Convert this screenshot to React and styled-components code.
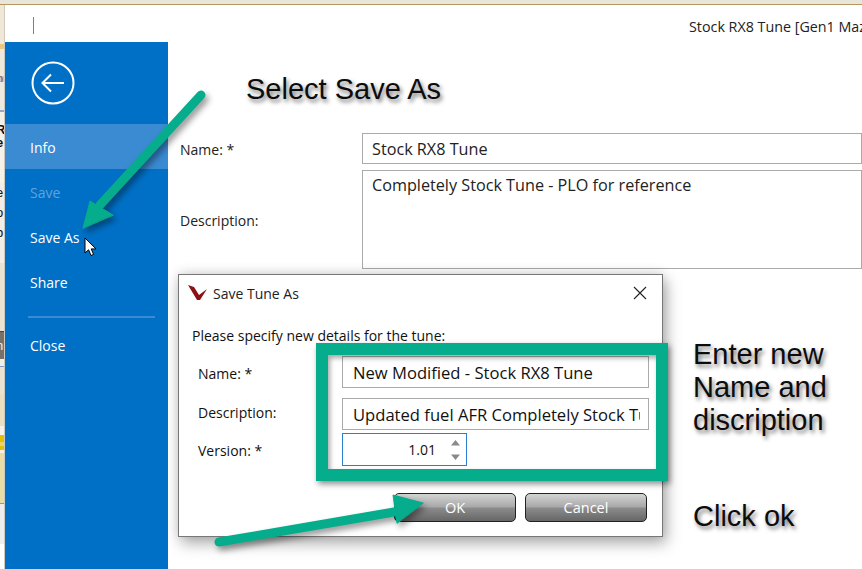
import React from 'react'
import styled, {createGlobalStyle} from 'styled-components'

const UI_FONT = `'Open Sans', 'Noto Sans', sans-serif`
const NOTE_FONT = `'Liberation Sans', Arial, sans-serif`

// what peeks out from behind the window on the left edge
const stripSlices = [
    {h: 39, bg: '#efe7d8'},
    {h: 5, bg: '#eec77f'},
    {h: 27, bg: '#efe9dc'},
    {h: 6, bg: '#cfc6cf', letter: 'o', color: '#8a5a4a'},
    {h: 28, bg: '#efeae0'},
    {h: 2, bg: '#8fa9c8'},
    {h: 11, bg: '#f3f0e8'},
    {h: 14, bg: '#f5f2ea', letter: 'R', bold: true},
    {h: 12, bg: '#f5f2ea', letter: 'e', bold: true},
    {h: 18, bg: '#f5f2ea', letter: ':', color: '#2a70c0'},
    {h: 16, bg: '#f5f2ea', letter: 'l', bold: true},
    {h: 20, bg: '#f2eee6', letter: 'e'},
    {h: 20, bg: '#f2eee6', letter: 'o'},
    {h: 20, bg: '#f2eee6', letter: 'b'},
    {h: 20, bg: '#f2eee6', letter: 'i'},
    {h: 68, bg: '#ebe3d2'},
    {h: 1, bg: '#444'},
    {h: 27, bg: '#77716a', letter: 'h', color: '#eee'},
    {h: 7, bg: '#f2efe8'},
    {h: 1, bg: '#7f9fc8'},
    {h: 22, bg: '#ebe3d2'},
    {h: 5, bg: '#ebe3d2', letter: '.', color: '#123a70'},
    {h: 32, bg: '#ebdfc0'},
    {h: 9, bg: '#f4f2ea'},
    {h: 7, bg: '#e6c000'},
    {h: 4, bg: '#e8d56a'},
    {h: 4, bg: '#e6c000'},
    {h: 3, bg: '#f4f2ea'},
    {h: 50, bg: '#e9dca4'},
    {h: 1, bg: '#99958a'},
    {h: 40, bg: '#ededed'},
]

const App = () => {
    return(
        <Page>
            <GlobalStyle />
            <TopEdge />
            <Desktop>
                <BackStrip>
                    {stripSlices.map((s, i) =>
                        <StripSlice key={i} $h={s.h} $bg={s.bg} $bold={s.bold} $color={s.color}>{s.letter}</StripSlice>
                    )}
                </BackStrip>
                <Window>
                    <TitleBar>
                        <Caret />
                        <WindowTitle>Stock RX8 Tune [Gen1 Mazda RX8]</WindowTitle>
                    </TitleBar>
                    <Content>
                        <Sidebar>
                            <BackRow>
                                <svg width="44" height="44" viewBox="0 0 44 44" fill="none" stroke="#fff" strokeWidth="2">
                                    <circle cx="22" cy="22" r="20.5" />
                                    <path d="M33 22H12M20 13.5 11.5 22l8.5 8.5" />
                                </svg>
                            </BackRow>
                            <SidebarItem $active>Info</SidebarItem>
                            <SidebarItem $dim>Save</SidebarItem>
                            <SidebarItem>Save As</SidebarItem>
                            <SidebarItem>Share</SidebarItem>
                            <SidebarRule />
                            <SidebarItem>Close</SidebarItem>
                        </Sidebar>
                        <Main>
                            <FieldLabel>Name: *</FieldLabel>
                            <TextField readOnly value="Stock RX8 Tune" />
                            <FieldLabel>Description:</FieldLabel>
                            <TextArea readOnly value="Completely Stock Tune - PLO for reference" />
                        </Main>
                    </Content>
                </Window>
            </Desktop>

            <Dialog>
                <DialogHeader>
                    <svg width="21" height="16" viewBox="0 0 21 16">
                        <polygon points="0,0 6,2 11,10 19,4 12,15 9,15" fill="#8c1016" />
                    </svg>
                    <DialogTitle>Save Tune As</DialogTitle>
                    <CloseIcon width="14" height="14" viewBox="0 0 14 14" stroke="#222" strokeWidth="1.1">
                        <path d="M1 1l12 12M13 1 1 13" />
                    </CloseIcon>
                </DialogHeader>
                <Prompt>Please specify new details for the tune:</Prompt>
                <DialogForm>
                    <DialogLabel $shift={1}>Name: *</DialogLabel>
                    <DialogInput readOnly value="New Modified - Stock RX8 Tune" />
                    <DialogLabel $shift={-2}>Description:</DialogLabel>
                    <DialogInput readOnly value="Updated fuel AFR Completely Stock Tune - PLO for reference" />
                    <DialogLabel $shift={1}>Version: *</DialogLabel>
                    <Spinner>
                        <SpinnerValue>1.01</SpinnerValue>
                        <SpinnerArrows>
                            <svg width="9" height="22" viewBox="0 0 9 22" fill="#8a8a8a">
                                <path d="M4.5 1 9 6.5H0zM0 15.5h9L4.5 21z" />
                            </svg>
                        </SpinnerArrows>
                    </Spinner>
                </DialogForm>
                <ButtonRow>
                    <GreyButton>OK</GreyButton>
                    <GreyButton>Cancel</GreyButton>
                </ButtonRow>
            </Dialog>

            <HighlightFrame />

            <Arrows width="862" height="569" viewBox="0 0 862 569">
                <g fill="#05ad8c" stroke="#05ad8c" strokeLinecap="round" strokeLinejoin="round">
                    <path d="M201 95 100 205" fill="none" strokeWidth="9" />
                    <polygon points="83,228 90,201 113,215" strokeWidth="1" />
                    <path d="M219 542 400 511" fill="none" strokeWidth="9" />
                    <polygon points="423,503 393,495 397,523" strokeWidth="1" />
                </g>
            </Arrows>

            <Pointer width="13" height="20" viewBox="0 0 13 20">
                <path d="M1 1v15l3.6-3.2L7 18.5l2.6-1.1-2.4-5.5H12z" fill="#fff" stroke="#000" strokeWidth="1" />
            </Pointer>

            <Note $x={246} $y={73}>Select Save As</Note>
            <Note $x={693} $y={338}>Enter new<br />Name and<br />discription</Note>
            <Note $x={693} $y={500}>Click ok</Note>
        </Page>
    )
};

const GlobalStyle = createGlobalStyle`
    html, body{
        margin: 0;
        padding: 0;
        background: #fff;
    }
    *{
        box-sizing: border-box;
    }
`;

const Page = styled.div`
    position: relative;
    display: flex;
    flex-direction: column;
    width: 862px;
    height: 569px;
    overflow: hidden;
    font-family: ${UI_FONT};
    background: #fff;
`;

const TopEdge = styled.div`
    height: 5px;
    flex: none;
    background: #e9e5da;
    border-bottom: 1px solid #b39a5c;
`;

const Desktop = styled.div`
    display: flex;
    flex: 1;
    min-height: 0;
`;

const BackStrip = styled.div`
    display: flex;
    flex-direction: column;
    flex: none;
    width: 5px;
    overflow: hidden;
    border-right: 1px solid #cfcabd;
`;

const StripSlice = styled.div`
    flex: none;
    height: ${p => p.$h}px;
    background: ${p => p.$bg};
    color: ${p => p.$color || '#111'};
    font-family: ${NOTE_FONT};
    font-size: 13px;
    font-weight: ${p => p.$bold ? 700 : 400};
    line-height: ${p => p.$h}px;
    text-indent: -4px;
    overflow: hidden;
`;

const Window = styled.div`
    display: flex;
    flex-direction: column;
    flex: 1;
    min-width: 0;
`;

const TitleBar = styled.div`
    display: flex;
    align-items: center;
    flex: none;
    height: 37px;
    padding-left: 28px;
    overflow: hidden;
    white-space: nowrap;
`;

const Caret = styled.div`
    flex: none;
    width: 1px;
    height: 17px;
    margin-top: 3px;
    background: #808080;
`;

const WindowTitle = styled.div`
    flex: none;
    margin: 5px 0 0 655px;
    font-size: 14.3px;
    color: #222;
`;

const Content = styled.div`
    display: flex;
    flex: 1;
    min-height: 0;
`;

const Sidebar = styled.nav`
    display: flex;
    flex-direction: column;
    flex: none;
    width: 163px;
    background: #0070c6;
`;

const BackRow = styled.div`
    display: flex;
    align-items: center;
    height: 82px;
    padding-left: 26px;
`;

const SidebarItem = styled.div`
    display: flex;
    align-items: center;
    height: 45px;
    padding: 2px 0 0 25px;
    font-size: 14px;
    color: ${p => p.$dim ? '#5fa3dc' : '#fff'};
    background: ${p => p.$active ? '#3a8bd2' : 'transparent'};
`;

const SidebarRule = styled.div`
    height: 2px;
    margin: 12px 13px 4px 23px;
    background: #3a8bd2;
`;

const Main = styled.main`
    display: grid;
    grid-template-columns: 182px 1fr;
    grid-template-rows: 31px 99px;
    row-gap: 6px;
    align-items: center;
    align-content: start;
    flex: 1;
    min-width: 0;
    padding: 91px 0 0 12px;
`;

const FieldLabel = styled.label`
    padding-top: 2px;
    font-size: 14px;
    color: #222;
`;

const TextField = styled.input`
    width: 100%;
    height: 100%;
    padding: 0 10px 0 9px;
    border: 1px solid #aaa;
    outline: none;
    font-family: ${UI_FONT};
    font-size: 16.2px;
    color: #222;
`;

const TextArea = styled.textarea`
    display: block;
    width: 100%;
    height: 100%;
    padding: 3px 10px 3px 9px;
    border: 1px solid #aaa;
    outline: none;
    resize: none;
    overflow: hidden;
    font-family: ${UI_FONT};
    font-size: 16.2px;
    color: #222;
`;

const Dialog = styled.section`
    position: absolute;
    left: 178px;
    top: 274px;
    display: flex;
    flex-direction: column;
    width: 485px;
    height: 263px;
    padding: 0 15px 14px 13px;
    background: #fff;
    border: 1px solid #777;
    box-shadow: 3px 6px 14px rgba(0,0,0,.35), 0 -3px 10px rgba(0,0,0,.08);
`;

const DialogHeader = styled.header`
    display: flex;
    align-items: center;
    flex: none;
    height: 36px;
    margin-left: -4px;
`;

const DialogTitle = styled.h1`
    margin: 0 0 0 4px;
    flex: 1;
    font-size: 14px;
    font-weight: 400;
    color: #222;
`;

const CloseIcon = styled.svg`
    margin-right: 0;
`;

const Prompt = styled.p`
    margin: 16px 0 0 0;
    font-size: 14px;
    line-height: 18px;
    color: #111;
`;

const DialogForm = styled.div`
    display: grid;
    grid-template-columns: 144px 307px;
    grid-template-rows: 42px 35px 33px;
    align-items: start;
    margin: 11px 0 0 6px;
`;

const DialogLabel = styled.label`
    margin-top: ${p => p.$shift || 0}px;
    font-size: 14px;
    line-height: 33px;
    color: #111;
`;

const DialogInput = styled(TextField)`
    height: 32px;
    padding: 0 8px 0 10px;
    font-size: 16.6px;
    color: #111;
`;

const Spinner = styled.div`
    display: flex;
    align-items: center;
    justify-content: flex-end;
    width: 125px;
    height: 33px;
    border: 1px solid #2a7fd0;
`;

const SpinnerValue = styled.span`
    font-size: 14px;
    color: #111;
`;

const SpinnerArrows = styled.div`
    display: flex;
    margin: 0 6px 0 15px;
`;

const ButtonRow = styled.div`
    display: flex;
    justify-content: flex-end;
    gap: 9px;
    margin-top: auto;
`;

const GreyButton = styled.button`
    width: 122px;
    height: 29px;
    padding: 0;
    border: 1px solid #222;
    border-radius: 5px;
    background: linear-gradient(to bottom, #d4d4d4 0%, #a8a8a8 48%, #8c8c8c 52%, #666 100%);
    font-family: ${UI_FONT};
    font-size: 14.5px;
    color: #fff;
`;

const HighlightFrame = styled.div`
    position: absolute;
    left: 316px;
    top: 343px;
    width: 352px;
    height: 138px;
    border: 12px solid #05ad8c;
    box-shadow: 2px 3px 6px rgba(0,0,0,.45), inset 2px 3px 5px rgba(0,0,0,.35);
`;

const Arrows = styled.svg`
    position: absolute;
    left: 0;
    top: 0;
    pointer-events: none;
    filter: drop-shadow(3px 4px 3px rgba(0,0,0,.4));
`;

const Pointer = styled.svg`
    position: absolute;
    left: 84px;
    top: 237px;
`;

const Note = styled.div`
    position: absolute;
    left: ${p => p.$x}px;
    top: ${p => p.$y}px;
    font-family: ${NOTE_FONT};
    font-size: 29px;
    line-height: 33px;
    color: #0c0c0c;
    white-space: nowrap;
    text-shadow: 2px 3px 4px rgba(0,0,0,.55);
`;

export default App;
